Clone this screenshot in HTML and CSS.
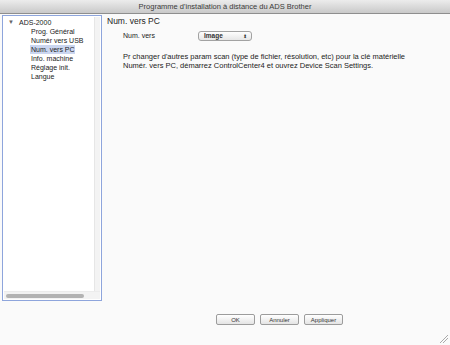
FILE: index.html
```html
<!DOCTYPE html>
<html lang="fr">
<head>
<meta charset="utf-8">
<link rel="stylesheet" href="styles.css">
</head>
<body>
<div class="window">
  <div class="titlebar">Programme d'installation à distance du ADS Brother</div>
  <div class="main">
    <div class="sidebar">
      <div class="tree">
        <div class="root"><span class="tri">▼</span>ADS-2000</div>
        <div class="item">Prog. Général</div>
        <div class="item">Numér vers USB</div>
        <div class="item sel">Num. vers PC</div>
        <div class="item">Info. machine</div>
        <div class="item">Réglage init.</div>
        <div class="item">Langue</div>
      </div>
      <div class="vtrack"></div>
      <div class="htrack"><div class="hthumb"></div></div>
    </div>
    <div class="content">
      <div class="heading">Num. vers PC</div>
      <div class="row">
        <span class="label">Num. vers</span>
        <span class="select"><span>Image</span><span class="arrows">⬍</span></span>
      </div>
      <p class="note">Pr changer d'autres param scan (type de fichier, résolution, etc) pour la clé matérielle<br>Numér. vers PC, démarrez ControlCenter4 et ouvrez Device Scan Settings.</p>
    </div>
  </div>
  <div class="footer">
    <button class="btn">OK</button>
    <button class="btn">Annuler</button>
    <button class="btn">Appliquer</button>
  </div>
  <div class="grip"></div>
</div>
</body>
</html>
```
FILE: styles.css
```css
* { box-sizing: border-box; }
html, body { margin: 0; padding: 0; }
body {
  width: 450px; height: 345px; overflow: hidden;
  font-family: "Liberation Sans", Arial, sans-serif;
  font-size: 7px; color: #222;
  background: #fafafa;
}
.window { position: relative; width: 450px; height: 345px; display: flex; flex-direction: column; }
.titlebar {
  height: 14px; line-height: 14px; text-align: center;
  font-size: 7.5px; color: #3a3a3a;
  background: linear-gradient(#ececec, #c9c9c9);
  border-bottom: 1px solid #8e8e8e;
}
.main { display: flex; height: 287px; }
.sidebar {
  position: relative;
  margin: 1px 0 0 2px; width: 100px; height: 286px;
  border: 1px solid #8ea5dc; background: #fff;
}
.tree { padding: 2px 0 0 5px; line-height: 9px; }
.root { display: flex; align-items: center; }
.tri { font-size: 6px; color: #666; width: 11px; }
.item { padding-left: 23px; }
.sel { background: linear-gradient(90deg, transparent 22px, #cbd6f0 22px, #cbd6f0 67px, transparent 67px); }
.vtrack {
  position: absolute; right: 1px; top: 1px; bottom: 8px; width: 6px;
  background: #f3f3f3; border-left: 1px solid #e6e6e6;
}
.htrack {
  position: absolute; left: 1px; right: 1px; bottom: 1px; height: 8px;
  background: #f3f3f3; border-top: 1px solid #ececec;
  display: flex; align-items: center; padding-left: 2px;
}
.hthumb { width: 78px; height: 4px; border-radius: 2px; background: #b3b3b3; }
.content { flex: 1; padding: 2px 0 0 5px; }
.heading { font-size: 8.5px; line-height: 11px; color: #222; }
.row { display: flex; align-items: center; padding-left: 16px; margin-top: 3px; height: 11px; }
.label { width: 75px; }
.select {
  display: flex; justify-content: space-between; align-items: center;
  width: 54px; height: 10px; padding: 0 4px 0 5px;
  border: 1px solid #a2a2a2; border-radius: 3px;
  background: linear-gradient(#fefefe, #e6e6e6);
  font-size: 6.5px; font-weight: bold; color: #333;
}
.arrows { font-size: 5px; font-weight: normal; }
.note { margin: 11px 0 0 16px; line-height: 9px; font-size: 7.5px; }
.footer { display: flex; gap: 5px; padding: 13px 0 0 216px; }
.btn {
  width: 39px; height: 11px; padding: 0;
  font-family: "Liberation Sans", Arial, sans-serif; font-size: 6px; color: #333;
  border: 1px solid #9c9c9c; border-radius: 2px;
  background: linear-gradient(#ffffff, #e4e4e4);
}
.grip {
  position: absolute; right: 2px; bottom: 2px; width: 8px; height: 8px;
  background: linear-gradient(135deg, transparent 45%, #aaa 45%, #aaa 52%, transparent 52%, transparent 68%, #aaa 68%, #aaa 75%, transparent 75%);
}
```
